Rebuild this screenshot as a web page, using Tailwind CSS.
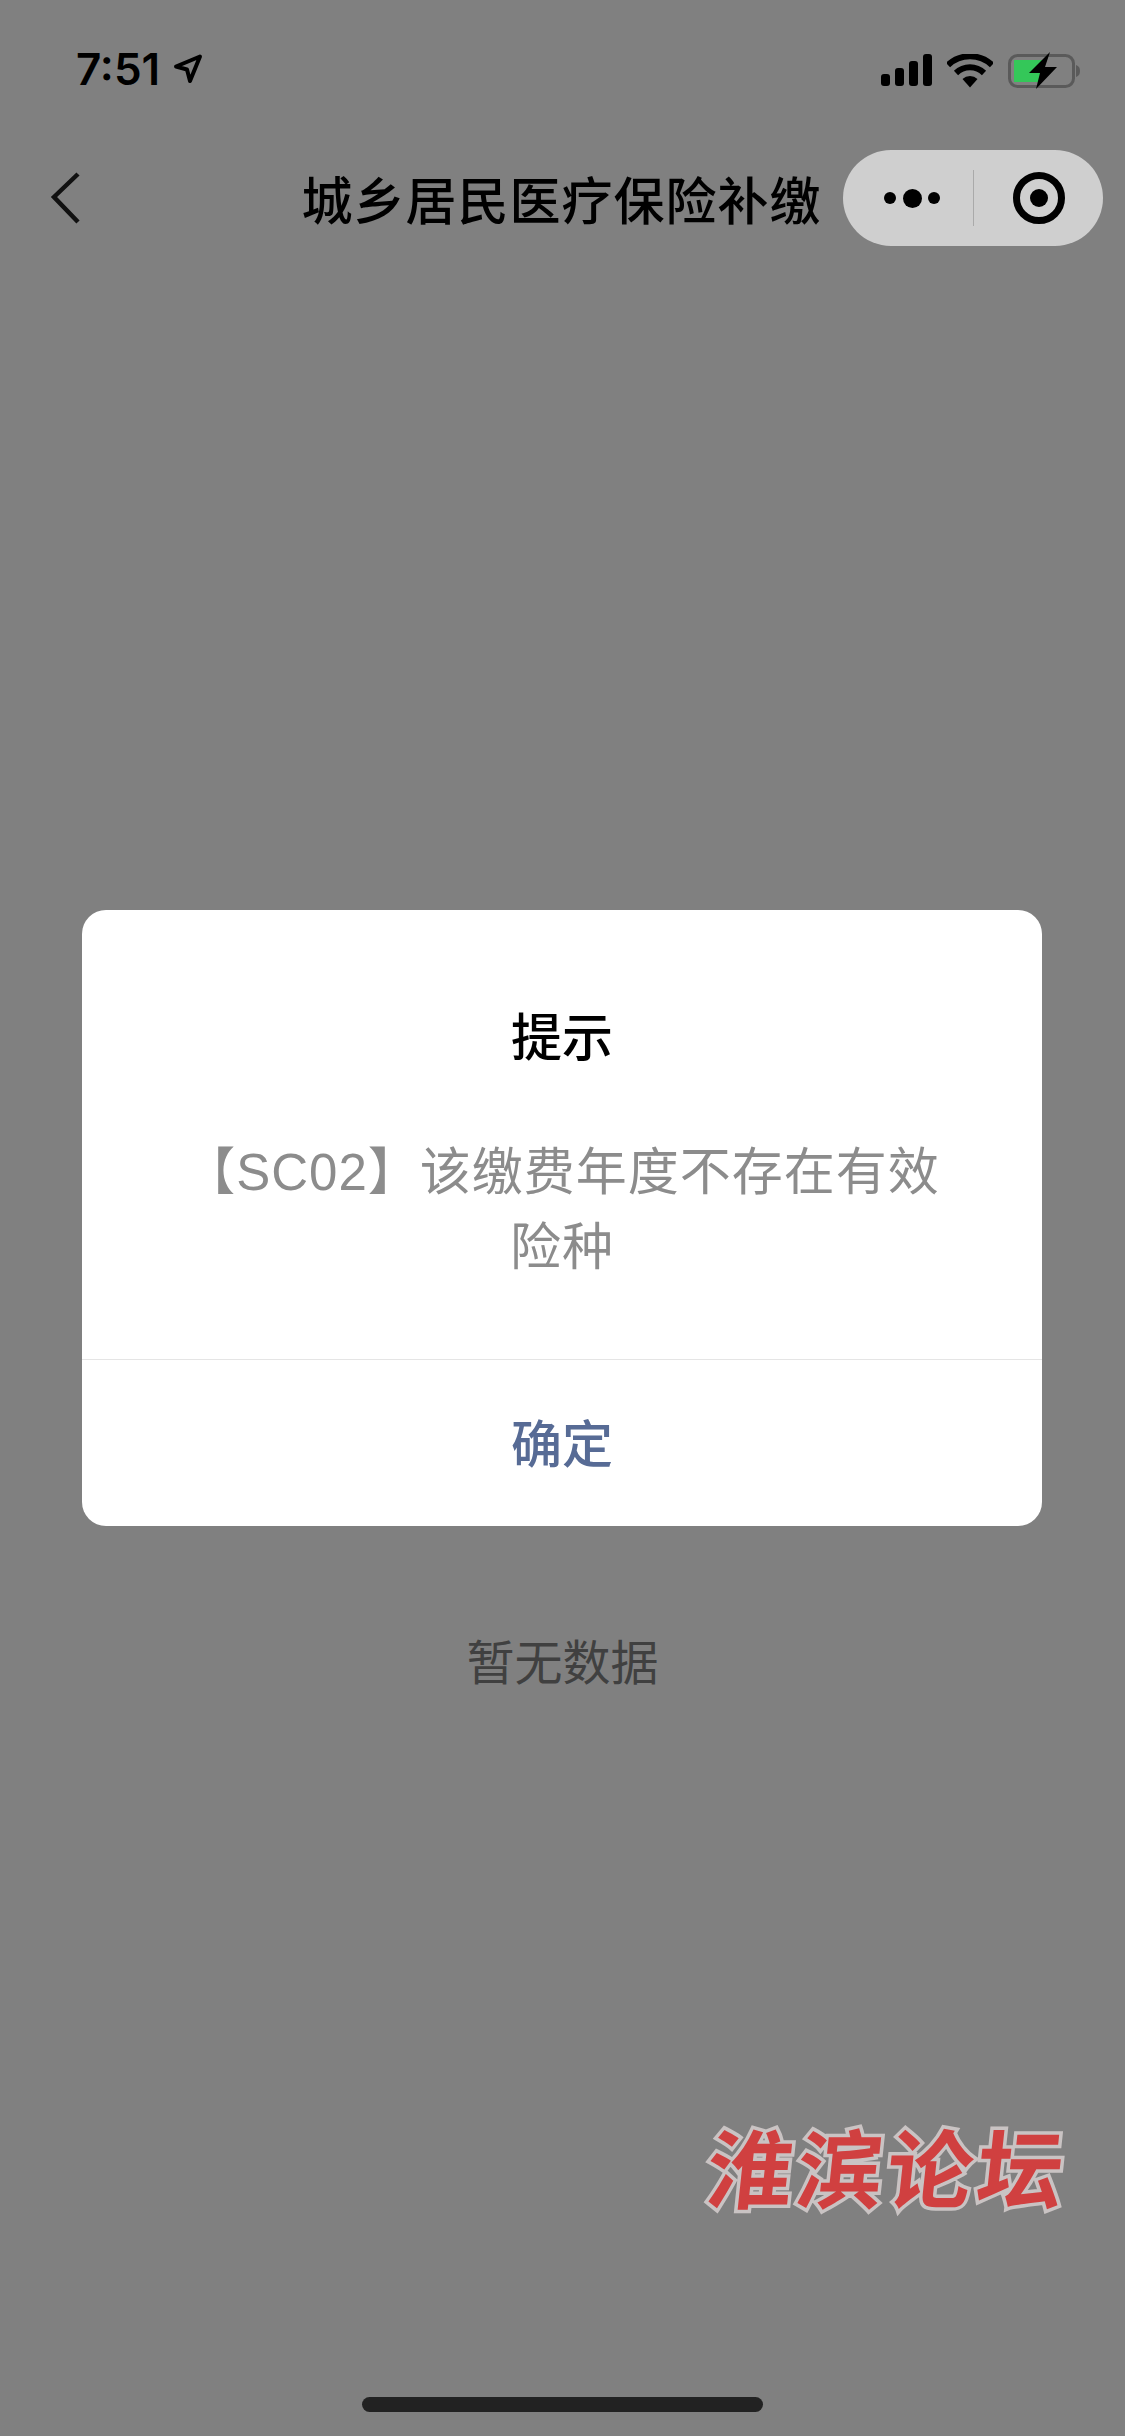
<!DOCTYPE html>
<html lang="zh">
<head>
<meta charset="utf-8">
<script src="https://cdn.jsdelivr.net/npm/@tailwindcss/browser@4"></script>
</head>
<body class="m-0">
<div class="relative flex h-[2436px] w-[1125px] flex-col overflow-hidden bg-[#808080] font-['Noto_Sans_CJK_SC',sans-serif] text-black">
  <!-- status bar -->
  <div class="flex h-[150px] items-start justify-between pt-[44px] pr-[43px] pl-[76px]">
    <div class="flex items-center gap-[13px]">
      <span class="font-['Inter',sans-serif] text-[44px] leading-[50px] font-semibold">7:51</span>
      <svg class="h-[30px] w-[30px]" viewBox="0 0 30 30"><path d="M27 2.500 L3 12.500 L14 15.500 L17 27 Z" fill="none" stroke="#000" stroke-width="4" stroke-linejoin="round"/></svg>
    </div>
    <div class="flex items-center gap-[15px] pt-[8px]">
      <svg class="h-[33px] w-[51px]" viewBox="0 0 51 33"><rect x="0" y="20" width="9" height="12" rx="3"/><rect x="14" y="14" width="9" height="18" rx="3"/><rect x="28" y="7" width="9" height="25" rx="3"/><rect x="42" y="0" width="9" height="32" rx="3"/></svg>
      <svg class="h-[34px] w-[46px]" viewBox="0 0 46 34"><path d="M1 11 A32 32 0 0 1 45 11" fill="none" stroke="#000" stroke-width="6"/><path d="M9 19 A20 20 0 0 1 37 19" fill="none" stroke="#000" stroke-width="6"/><path d="M15.500 25 A11 11 0 0 1 30.500 25 L23 33.500 Z"/></svg>
      <svg class="h-[37px] w-[74px]" viewBox="0 0 74 37"><rect x="1.500" y="3.500" width="64" height="31" rx="8" fill="none" stroke="#5a5a5a" stroke-width="3"/><path d="M6 8 H36 L32 30 H6 Z" fill="#34c759"/><path d="M68 13 C71 14 72 16 72 19 C72 22 71 24 68 25 Z" fill="#5a5a5a"/><path d="M42 0 L21 21 H32 L28 37 L49 15 H37 Z"/></svg>
    </div>
  </div>
  <!-- nav bar -->
  <div class="relative flex h-[96px] items-center justify-center pr-[2px]">
    <svg class="absolute top-[20px] left-[48px] h-[56px] w-[36px]" viewBox="0 0 36 56"><path d="M30 4 L6 27 L30 52" fill="none" stroke="#111" stroke-width="4.500"/></svg>
    <h1 class="text-[51px] leading-[96px] font-medium tracking-[1px]">城乡居民医疗保险补缴</h1>
    <div class="absolute top-0 right-[22px] flex h-[96px] w-[260px] items-center rounded-full bg-[#cfcfcf]">
      <div class="flex w-[130px] items-center justify-end gap-[6.5px] pr-[33px]">
        <span class="h-[12px] w-[12px] rounded-full bg-black"></span>
        <span class="h-[19px] w-[19px] rounded-full bg-black"></span>
        <span class="h-[12px] w-[12px] rounded-full bg-black"></span>
      </div>
      <div class="h-[56px] w-px bg-[#aaaaaa]"></div>
      <div class="flex flex-1 items-center justify-center">
        <div class="flex h-[52px] w-[52px] items-center justify-center rounded-full border-[7px] border-black">
          <span class="h-[18px] w-[18px] rounded-full bg-black"></span>
        </div>
      </div>
    </div>
  </div>
  <!-- empty state -->
  <div class="flex flex-1 justify-center pt-[1378px]">
    <p class="text-[48px] leading-[70px] text-[#404040]">暂无数据</p>
  </div>
  <!-- home indicator -->
  <div class="flex h-[39px] justify-center">
    <div class="h-[15px] w-[401px] rounded-full bg-[#222222]"></div>
  </div>

  <!-- dialog -->
  <div class="absolute top-[910px] left-[82px] flex h-[616px] w-[960px] flex-col rounded-[24px] bg-white">
    <div class="flex flex-1 flex-col items-center px-[72px] pt-[88px] text-center">
      <h2 class="text-[51px] leading-[72px] font-medium">提示</h2>
      <p class="mt-[65px] font-['Liberation_Sans','Noto_Sans_CJK_SC',sans-serif] text-[51px] leading-[75px] tracking-[1px] text-[#8c8c8c]">【SC02】该缴费年度不存在有效<br>险种</p>
    </div>
    <div class="flex h-[167px] items-center justify-center border-t border-[#e5e5e5] pb-[4px] text-[51px] font-medium text-[#576b95]">确定</div>
  </div>

  <!-- watermark -->
  <div class="absolute top-[2110px] left-[708px] flex w-[356px] justify-between -skew-x-6 text-[86px] leading-[110px] font-bold text-[#d04040] [paint-order:stroke_fill] [-webkit-text-stroke:7px_#c9c3c3]">
    <span>淮</span><span>滨</span><span>论</span><span>坛</span>
  </div>
</div>
</body>
</html>
